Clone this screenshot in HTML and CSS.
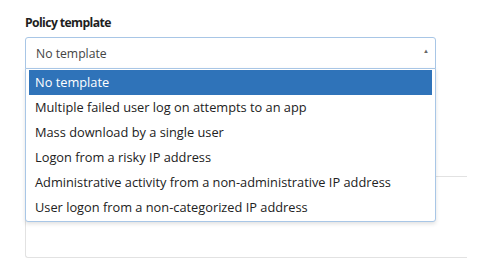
FILE: index.html
```html
<!DOCTYPE html>
<html lang="en">
<head>
    <meta charset="UTF-8">
    <title>Policy template</title>
    <link rel="stylesheet" href="styles.css">
</head>
<body>

<div class="field">
    <label class="field-label">Policy template</label>
    <div class="select-wrap">
        <div class="select">
            <span>No template</span>
            <span class="caret">&#9650;</span>
        </div>
        <ul class="options">
            <li class="option selected">No template</li>
            <li class="option">Multiple failed user log on attempts to an app</li>
            <li class="option">Mass download by a single user</li>
            <li class="option">Logon from a risky IP address</li>
            <li class="option">Administrative activity from a non-administrative IP address</li>
            <li class="option">User logon from a non-categorized IP address</li>
        </ul>
    </div>
    <div class="below-box"></div>
</div>

</body>
</html>
```

FILE: styles.css
```css
body {
    font-family: "Open Sans", "Noto Sans", sans-serif;
    margin: 0;
    padding: 14px 0 0 25px;
    background-color: #fff;
    color: #222;
}
.field {
    width: 442px;
}
.field-label {
    display: block;
    font-size: 12.2px;
    font-weight: bold;
    letter-spacing: -0.6px;
    line-height: 18px;
    margin-bottom: 5px;
    color: #1e1e1e;
}
.select-wrap {
    position: relative;
    width: 411px;
}
.select {
    display: flex;
    justify-content: space-between;
    align-items: center;
    height: 30px;
    padding: 0 6px 0 10px;
    border: 1px solid #a8c6e6;
    border-radius: 3px 3px 0 0;
    font-size: 12.2px;
    color: #444;
}
.caret {
    font-size: 6px;
    color: #666;
    margin-top: -4px;
}
.options {
    position: absolute;
    top: 31px;
    left: 0;
    right: 0;
    margin: 0;
    padding: 1px 3px 1px 3px;
    list-style: none;
    background-color: #fff;
    border: 1px solid #a8c6e6;
    border-radius: 0 0 3px 3px;
    box-shadow: 0 2px 4px rgba(0, 0, 0, 0.12);
    z-index: 2;
}
.option {
    height: 25px;
    line-height: 25px;
    padding-left: 6px;
    font-size: 12.8px;
    color: #222;
    white-space: nowrap;
}
.option.selected {
    background-color: #2f73b9;
    color: #fff;
}
.below-box {
    margin-top: 107px;
    height: 80px;
    border: 1px solid #e2e2e2;
    border-right: none;
    border-radius: 3px 0 0 3px;
}
```
